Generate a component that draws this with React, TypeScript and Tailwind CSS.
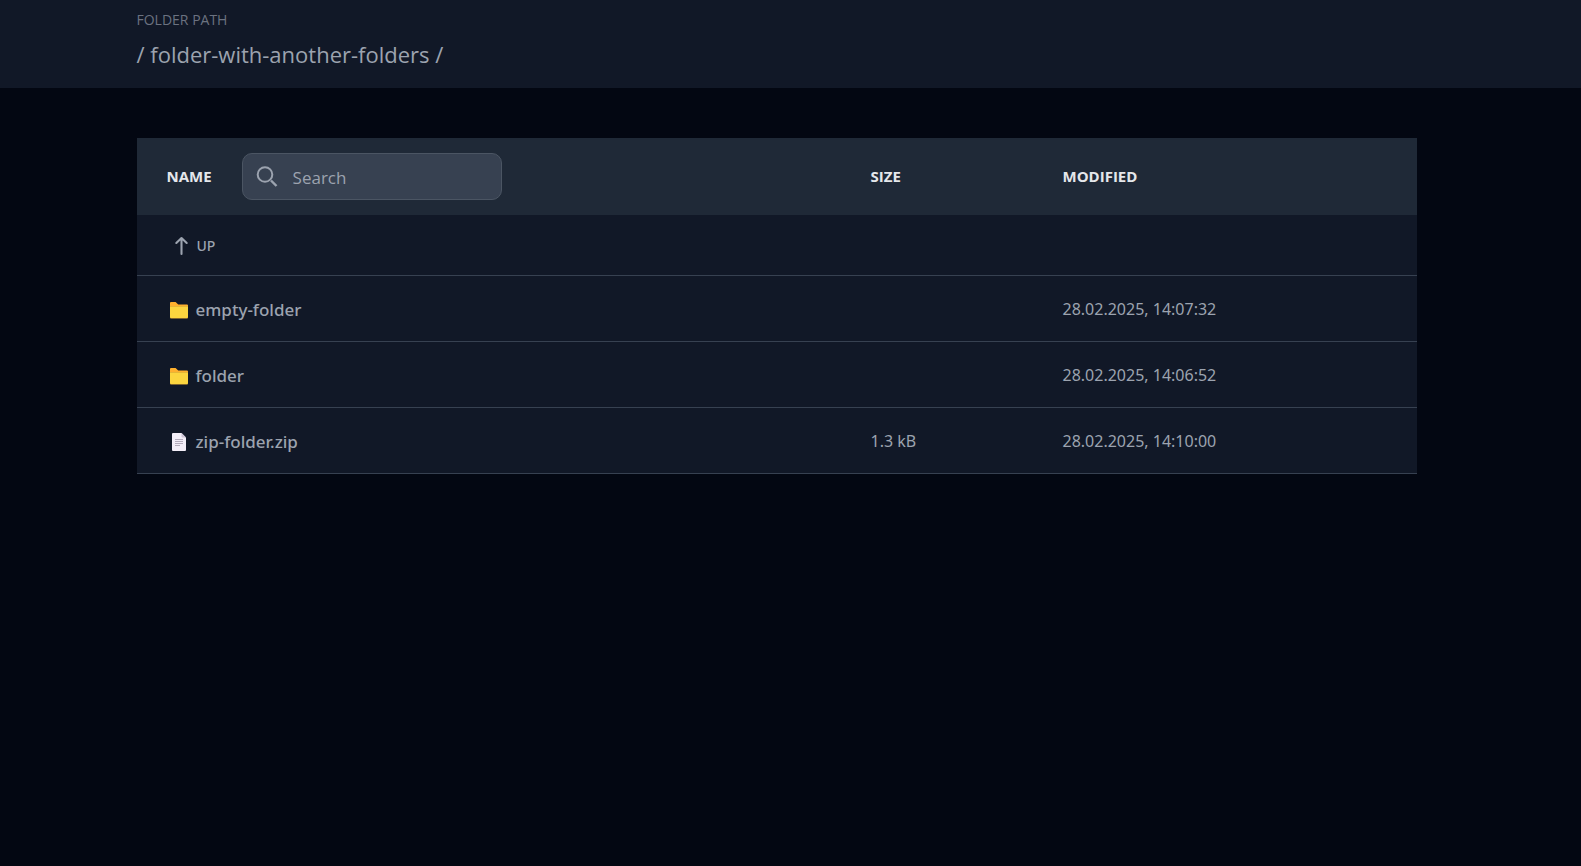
import { useState } from "react";

type Entry = { name: string; kind: "folder" | "file"; size: string; modified: string };

const entries: Entry[] = [
  { name: "empty-folder", kind: "folder", size: "", modified: "28.02.2025, 14:07:32" },
  { name: "folder", kind: "folder", size: "", modified: "28.02.2025, 14:06:52" },
  { name: "zip-folder.zip", kind: "file", size: "1.3 kB", modified: "28.02.2025, 14:10:00" },
];

function FolderIcon() {
  return (
    <svg className="size-5 shrink-0" viewBox="0 0 20 20" aria-hidden="true">
      <path d="M1 3a1 1 0 0 1 1-1h4.600l2.600 2.500H18a1 1 0 0 1 1 1V9H1z" fill="#ffb02e" />
      <path d="M1 6.500h18V17.500a1.300 1.300 0 0 1-1.300 1.300H2.300A1.300 1.300 0 0 1 1 17.500z" fill="#a37c30" />
      <path d="M1 6.500h18v10.500a1 1 0 0 1-1 1H2a1 1 0 0 1-1-1z" fill="#fcd53f" />
    </svg>
  );
}

function FileIcon() {
  return (
    <svg className="size-5 shrink-0" viewBox="0 0 20 20" aria-hidden="true">
      <path d="M3 2a1 1 0 0 1 1-1h8.500L17 5.500V18a1 1 0 0 1-1 1H4a1 1 0 0 1-1-1z" fill="#f3eef8" />
      <path d="M12.500 1 17 5.500h-3.500a1 1 0 0 1-1-1z" fill="#cdc4d6" />
      <path d="M6 7.500h8M6 9.500h8M6 11.500h8M6 13.500h5" stroke="#b4acbc" strokeWidth="1" />
    </svg>
  );
}

function SearchIcon() {
  return (
    <svg className="size-6 shrink-0 text-[#9ca3af]" viewBox="0 0 24 24" fill="none" stroke="currentColor" strokeWidth="2" aria-hidden="true">
      <circle cx="10" cy="9.500" r="7.300" />
      <path d="m16 15.500 5.500 5.500" strokeWidth="2.400" />
    </svg>
  );
}

function UpIcon() {
  return (
    <svg className="h-5 w-4 shrink-0" viewBox="0 0 16 20" fill="none" stroke="currentColor" strokeWidth="2.100" strokeLinecap="round" strokeLinejoin="round" aria-hidden="true">
      <path d="M8.500 18V2M3.300 7l5.200-5 5.200 5" />
    </svg>
  );
}

export default function App() {
  const [query, setQuery] = useState("");
  const visible = entries.filter((e) => e.name.includes(query.toLowerCase()));

  return (
    <div className="min-h-screen bg-[#030712] font-['Open_Sans',sans-serif] text-base leading-6 text-[#9ca3af]">
      <header className="bg-[#111827] pr-7">
        <div className="mx-auto flex max-w-7xl flex-col gap-1.5 pt-2 pb-[18px]">
          <p className="text-sm leading-6 text-[#6b7280]">FOLDER PATH</p>
          <h1 className="text-[22px] leading-8">/ folder-with-another-folders /</h1>
        </div>
      </header>
      <main className="pt-[50px] pr-7">
        <table className="mx-auto w-full max-w-7xl table-fixed border-collapse bg-[#111827] text-left">
          <colgroup>
            <col className="w-[55%]" />
            <col className="w-[15%]" />
            <col className="w-[30%]" />
          </colgroup>
          <thead className="bg-[#1f2937] text-[15px] text-[#e5e7eb]">
            <tr className="h-[77px]">
              <th className="px-[30px] font-bold">
                <div className="flex items-center gap-[30px]">
                  <span className="pb-0.5">NAME</span>
                  <label className="flex h-[47px] w-[260px] items-center gap-3.5 rounded-[10px] border border-[#4b5563] bg-[#374151] px-3">
                    <SearchIcon />
                    <input
                      type="search"
                      aria-label="Search"
                      placeholder="Search"
                      value={query}
                      onChange={(e) => setQuery(e.target.value)}
                      className="min-w-0 flex-1 bg-transparent pt-0.5 text-[17px] font-normal text-[#e5e7eb] outline-none placeholder:text-[#9ca3af]"
                    />
                  </label>
                </div>
              </th>
              <th className="px-[30px] pb-0.5 font-bold">SIZE</th>
              <th className="px-[30px] pb-0.5 font-bold">MODIFIED</th>
            </tr>
          </thead>
          <tbody className="font-['Noto_Sans',sans-serif]">
            <tr className="h-[60px] border-b border-[#374151]">
              <td colSpan={3} className="px-9">
                <a href="#up" className="inline-flex items-center gap-2 align-middle text-sm leading-6 font-medium">
                  <UpIcon />
                  UP
                </a>
              </td>
            </tr>
            {visible.map((entry) => (
              <tr key={entry.name} className="h-[66px] border-b border-[#374151]">
                <td className="px-8 pt-0.5">
                  <a href={`#${entry.name}`} className="inline-flex items-center gap-[7px] align-middle text-[17px] font-medium">
                    {entry.kind === "folder" ? <FolderIcon /> : <FileIcon />}
                    {entry.name}
                  </a>
                </td>
                <td className="px-[30px] pt-0.5">{entry.size}</td>
                <td className="px-[30px] pt-0.5">{entry.modified}</td>
              </tr>
            ))}
          </tbody>
        </table>
      </main>
    </div>
  );
}
